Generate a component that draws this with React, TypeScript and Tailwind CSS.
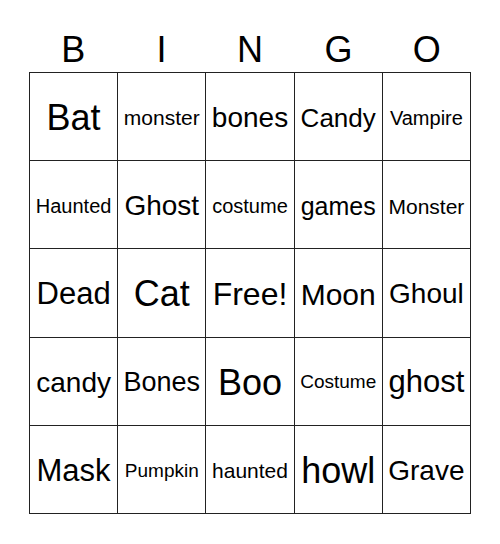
const header = ["B", "I", "N", "G", "O"];

// word + fitted font size (text shrinks to fit the cell width)
const cells: { word: string; size: string }[] = [
  { word: "Bat", size: "text-[36px]" },
  { word: "monster", size: "text-[21px]" },
  { word: "bones", size: "text-[28px]" },
  { word: "Candy", size: "text-[26px]" },
  { word: "Vampire", size: "text-[20px]" },
  { word: "Haunted", size: "text-[20px]" },
  { word: "Ghost", size: "text-[28px]" },
  { word: "costume", size: "text-[20px]" },
  { word: "games", size: "text-[25px]" },
  { word: "Monster", size: "text-[21px]" },
  { word: "Dead", size: "text-[31px]" },
  { word: "Cat", size: "text-[36px]" },
  { word: "Free!", size: "text-[32px]" },
  { word: "Moon", size: "text-[30px]" },
  { word: "Ghoul", size: "text-[28px]" },
  { word: "candy", size: "text-[28px]" },
  { word: "Bones", size: "text-[27px]" },
  { word: "Boo", size: "text-[36px]" },
  { word: "Costume", size: "text-[19px]" },
  { word: "ghost", size: "text-[31px]" },
  { word: "Mask", size: "text-[31px]" },
  { word: "Pumpkin", size: "text-[19px]" },
  { word: "haunted", size: "text-[21px]" },
  { word: "howl", size: "text-[36px]" },
  { word: "Grave", size: "text-[28px]" },
];

export default function App() {
  return (
    <div className="w-[500px] h-[544px] bg-white text-black font-['Liberation_Sans',Arial,sans-serif]">
      <div className="pl-[29px] pt-[31px]">
        <div className="grid grid-cols-5 w-[442px] mb-[4px]">
          {header.map((l) => (
            <div key={l} className="text-center text-[36px] leading-[37px]">
              {l}
            </div>
          ))}
        </div>

        <div className="grid grid-cols-5 grid-rows-5 w-[442px] h-[442px] border-l border-t border-[#222]">
          {cells.map((c, i) => (
            <div
              key={i}
              className={`flex items-center justify-center pt-[3px] border-r border-b border-[#222] whitespace-nowrap ${c.size}`}
            >
              {c.word}
            </div>
          ))}
        </div>
      </div>
    </div>
  );
}
